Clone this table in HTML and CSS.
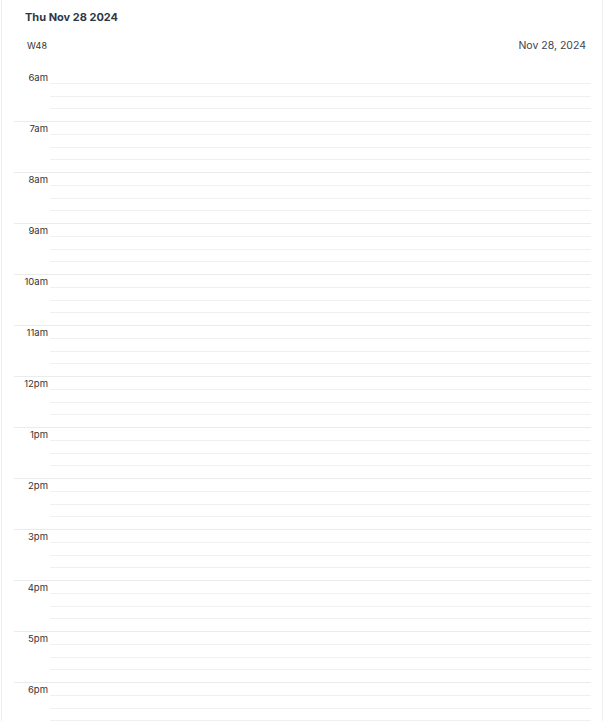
FILE: index.html
```html
<!DOCTYPE html>
<html>
<head>
<meta charset="utf-8">
<link rel="stylesheet" href="styles.css">
</head>
<body>
<div class="frame">
  <h1 class="title">Thu Nov 28 2024</h1>
  <div class="subrow">
    <span class="week">W48</span>
    <span class="date">Nov 28, 2024</span>
  </div>
  <div class="grid">
    <div class="hour"><div class="label">6am</div><div class="slots"><div class="slot"></div><div class="slot"></div><div class="slot"></div><div class="slot"></div></div></div>
    <div class="hour"><div class="label">7am</div><div class="slots"><div class="slot"></div><div class="slot"></div><div class="slot"></div><div class="slot"></div></div></div>
    <div class="hour"><div class="label">8am</div><div class="slots"><div class="slot"></div><div class="slot"></div><div class="slot"></div><div class="slot"></div></div></div>
    <div class="hour"><div class="label">9am</div><div class="slots"><div class="slot"></div><div class="slot"></div><div class="slot"></div><div class="slot"></div></div></div>
    <div class="hour"><div class="label">10am</div><div class="slots"><div class="slot"></div><div class="slot"></div><div class="slot"></div><div class="slot"></div></div></div>
    <div class="hour"><div class="label">11am</div><div class="slots"><div class="slot"></div><div class="slot"></div><div class="slot"></div><div class="slot"></div></div></div>
    <div class="hour"><div class="label">12pm</div><div class="slots"><div class="slot"></div><div class="slot"></div><div class="slot"></div><div class="slot"></div></div></div>
    <div class="hour"><div class="label">1pm</div><div class="slots"><div class="slot"></div><div class="slot"></div><div class="slot"></div><div class="slot"></div></div></div>
    <div class="hour"><div class="label">2pm</div><div class="slots"><div class="slot"></div><div class="slot"></div><div class="slot"></div><div class="slot"></div></div></div>
    <div class="hour"><div class="label">3pm</div><div class="slots"><div class="slot"></div><div class="slot"></div><div class="slot"></div><div class="slot"></div></div></div>
    <div class="hour"><div class="label">4pm</div><div class="slots"><div class="slot"></div><div class="slot"></div><div class="slot"></div><div class="slot"></div></div></div>
    <div class="hour"><div class="label">5pm</div><div class="slots"><div class="slot"></div><div class="slot"></div><div class="slot"></div><div class="slot"></div></div></div>
    <div class="hour"><div class="label">6pm</div><div class="slots"><div class="slot"></div><div class="slot"></div><div class="slot"></div><div class="slot"></div></div></div>
  </div>
</div>
</body>
</html>
```

FILE: styles.css
```css
html, body {
  margin: 0;
  padding: 0;
  background: #ffffff;
  font-family: Inter, "Liberation Sans", sans-serif;
  overflow: hidden;
}
.frame {
  margin-left: 1px;
  width: 602px;
  height: 721px;
  border-left: 1px solid #efefef;
  border-right: 1px solid #efefef;
  box-sizing: border-box;
}
.title {
  margin: 0;
  padding: 9px 0 0 23px;
  font-size: 11px;
  line-height: 16px;
  font-weight: 700;
  color: #2d3748;
}
.subrow {
  display: flex;
  justify-content: space-between;
  align-items: center;
  margin-top: 12px;
  height: 16px;
  padding: 0 16px 0 25px;
}
.week {
  font-size: 9px;
  color: #333333;
}
.date {
  font-size: 10.5px;
  color: #3d4451;
}
.grid {
  margin-top: 17px;
  padding: 0 11px 0 12px;
}
.hour {
  display: flex;
  height: 51px;
  border-top: 1px solid #ebebeb;
  box-sizing: border-box;
}
.hour:first-child {
  border-top-color: transparent;
}
.label {
  width: 34px;
  margin-right: 2px;
  margin-top: 1px;
  text-align: right;
  font-size: 9.5px;
  line-height: 12px;
  color: #333333;
}
.slots {
  flex: 1;
  display: flex;
  flex-direction: column;
}
.slot {
  flex: 1;
  border-bottom: 1px solid #f0f0f0;
}
.slot:last-child {
  border-bottom: none;
}
```
